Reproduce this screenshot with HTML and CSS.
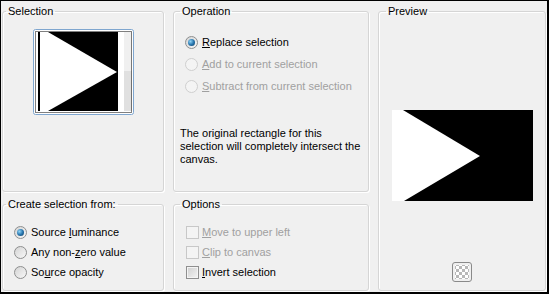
FILE: index.html
```html
<!DOCTYPE html>
<html lang="en">
<head>
    <meta charset="UTF-8">
    <title>Load Selection</title>
    <link rel="stylesheet" href="styles.css">
</head>
<body>

    <div class="dialog">

        <!-- Selection thumbnail -->
        <fieldset class="group sel">
            <legend>Selection</legend>
            <div class="thumb-row">
                <svg class="thumb" width="101" height="86" viewBox="0 0 101 86">
                    <rect x="0.5" y="0.5" width="100" height="85" rx="2" fill="#fff" stroke="#7fa6cf"/>
                    <rect x="5" y="3" width="80" height="79" fill="#000"/>
                    <polygon points="7,3 15,3 84,43 15,82 7,82" fill="#fff"/>
                    <rect x="91" y="3" width="8" height="39" fill="#f0f0f0"/>
                    <rect x="91" y="42" width="8" height="40" fill="#e0e0e0"/>
                    <rect x="2.5" y="2.5" width="96" height="81" fill="none" stroke="#000" stroke-dasharray="1 1"/>
                </svg>
            </div>
        </fieldset>

        <!-- Operation -->
        <fieldset class="group op">
            <legend>Operation</legend>
            <div class="choices wide">
                <label class="choice"><span class="radio on"></span><span><u>R</u>eplace selection</span></label>
                <label class="choice off"><span class="radio"></span><span><u>A</u>dd to current selection</span></label>
                <label class="choice off"><span class="radio"></span><span><u>S</u>ubtract from current selection</span></label>
            </div>
            <p class="note">The original rectangle for this<br>selection will completely intersect the<br>canvas.</p>
        </fieldset>

        <!-- Preview -->
        <fieldset class="group preview">
            <legend>Preview</legend>
            <div class="preview-body">
                <svg class="preview-img" width="141" height="91" viewBox="0 0 141 91">
                    <rect width="141" height="91" fill="#000"/>
                    <polygon points="0,0 11,0 88,46 12,91 0,91" fill="#fff"/>
                </svg>
                <span class="checker"></span>
            </div>
        </fieldset>

        <!-- Create selection from -->
        <fieldset class="group from">
            <legend>Create selection from:</legend>
            <div class="choices">
                <label class="choice"><span class="radio on"></span><span>Source <u>l</u>uminance</span></label>
                <label class="choice"><span class="radio"></span><span>Any non-<u>z</u>ero value</span></label>
                <label class="choice"><span class="radio"></span><span>So<u>u</u>rce opacity</span></label>
            </div>
        </fieldset>

        <!-- Options -->
        <fieldset class="group opts">
            <legend>Options</legend>
            <div class="choices">
                <label class="choice off"><span class="check"></span><span><u>M</u>ove to upper left</span></label>
                <label class="choice off"><span class="check"></span><span><u>C</u>lip to canvas</span></label>
                <label class="choice"><span class="check"></span><span><u>I</u>nvert selection</span></label>
            </div>
        </fieldset>

    </div>

</body>
</html>
```

FILE: styles.css
```css
body {
    margin: 0;
    font-family: "Liberation Sans", Arial, sans-serif;
    font-size: 11px;
    color: #000;
}

.dialog {
    width: 549px;
    height: 294px;
    box-sizing: border-box;
    border: 1px solid #000;
    border-right-width: 2px;
    border-bottom-width: 2px;
    padding: 4px 1px 0 1px;
    background-color: #f0f0f0;
    display: grid;
    grid-template-columns: 162px 196px 168px;
    grid-template-rows: 187px 93px;
    column-gap: 9px;
    row-gap: 6px;
}

.group {
    margin: 0;
    padding: 0;
    min-width: 0;
    border: 1px solid #d5d5d5;
    border-radius: 3px;
    box-shadow: inset 1px 1px 0 #fff, 1px 1px 0 #fff;
}

.group legend {
    padding: 0 2px;
    margin-left: 3px;
    line-height: 13px;
}

.op legend,
.opts legend {
    margin-left: 6px;
}

.preview legend {
    margin-left: 7px;
}

.preview {
    grid-column: 3;
    grid-row: 1 / 3;
}

.thumb-row {
    display: flex;
    justify-content: center;
    padding-top: 11px;
}

.thumb {
    display: block;
}

.choices {
    display: flex;
    flex-direction: column;
    padding: 11px 0 0 11px;
}

.choices.wide {
    padding-top: 13px;
}

.choice {
    display: flex;
    align-items: center;
    gap: 4px;
    height: 20px;
}

.wide .choice {
    height: 22px;
}

.opts .choice {
    gap: 3px;
    padding-left: 1px;
}

.choice.off {
    color: #a0a0a0;
}

.radio {
    width: 11px;
    height: 11px;
    border: 1px solid #8e8f8f;
    border-radius: 50%;
    background: linear-gradient(135deg, #d4d4d4, #f8f8f8);
    position: relative;
}

.radio.on::after {
    content: "";
    position: absolute;
    left: 2px;
    top: 2px;
    width: 7px;
    height: 7px;
    border-radius: 50%;
    background: radial-gradient(circle at 35% 35%, #8fd3f5, #2a78b0 50%, #0b3a60);
}

.off .radio {
    border-color: #cfcfcf;
    background: #f4f4f4;
}

.check {
    width: 11px;
    height: 11px;
    border: 1px solid #8f8f8f;
    background: linear-gradient(135deg, #cfcfcf, #f4f4f4);
    box-shadow: inset 0 0 0 1px #f4f4f4;
}

.off .check {
    border-color: #c8c8c8;
    background: #f4f4f4;
    box-shadow: none;
}

.note {
    margin: 30px 0 0 6px;
    line-height: 13px;
    white-space: nowrap;
}

.preview-body {
    display: flex;
    flex-direction: column;
    align-items: center;
    padding-top: 92px;
}

.preview-img {
    display: block;
}

.checker {
    margin-top: 61px;
    width: 20px;
    height: 20px;
    border: 1px solid #8a8a8a;
    border-radius: 3px;
    background-color: #fff;
    background-image:
        linear-gradient(45deg, #b8b8b8 25%, transparent 25%, transparent 75%, #b8b8b8 75%),
        linear-gradient(45deg, #b8b8b8 25%, transparent 25%, transparent 75%, #b8b8b8 75%);
    background-size: 6px 6px;
    background-position: 3px 3px, 6px 6px;
    background-clip: content-box;
    padding: 2px;
    box-sizing: border-box;
}
```
